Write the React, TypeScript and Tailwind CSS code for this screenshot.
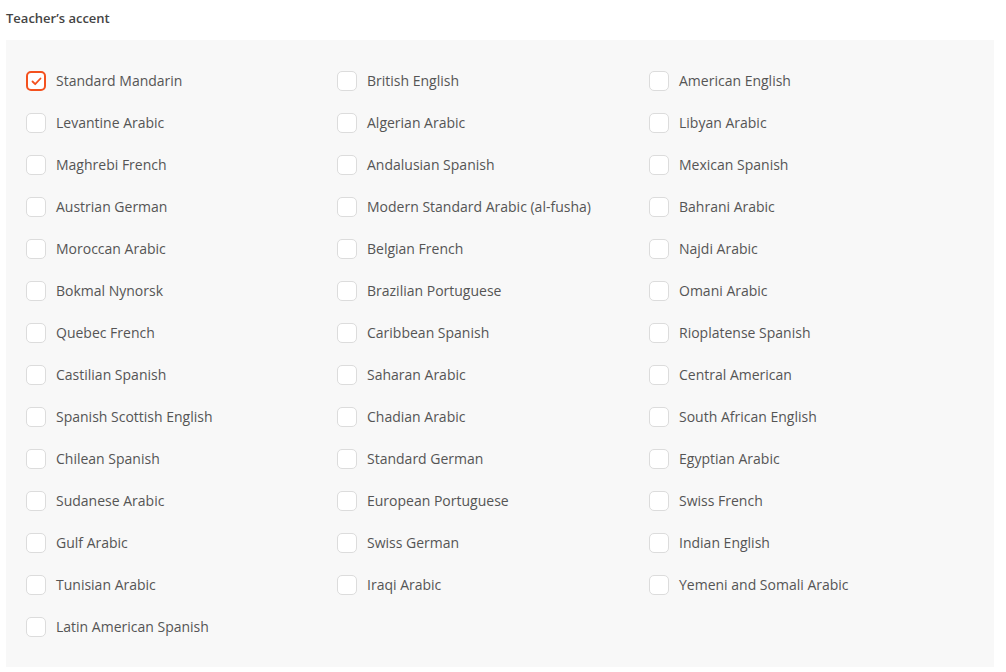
import React from 'react';

const accents = [
  'Standard Mandarin', 'British English', 'American English',
  'Levantine Arabic', 'Algerian Arabic', 'Libyan Arabic',
  'Maghrebi French', 'Andalusian Spanish', 'Mexican Spanish',
  'Austrian German', 'Modern Standard Arabic (al-fusha)', 'Bahrani Arabic',
  'Moroccan Arabic', 'Belgian French', 'Najdi Arabic',
  'Bokmal Nynorsk', 'Brazilian Portuguese', 'Omani Arabic',
  'Quebec French', 'Caribbean Spanish', 'Rioplatense Spanish',
  'Castilian Spanish', 'Saharan Arabic', 'Central American',
  'Spanish Scottish English', 'Chadian Arabic', 'South African English',
  'Chilean Spanish', 'Standard German', 'Egyptian Arabic',
  'Sudanese Arabic', 'European Portuguese', 'Swiss French',
  'Gulf Arabic', 'Swiss German', 'Indian English',
  'Tunisian Arabic', 'Iraqi Arabic', 'Yemeni and Somali Arabic',
  'Latin American Spanish',
];

function Checkbox({ checked }: { checked: boolean }) {
  if (checked) {
    return (
      <span className="w-5 h-5 rounded-[5px] border-2 border-[#f4511e] bg-white flex items-center justify-center shrink-0">
        <svg width="11" height="9" viewBox="0 0 11 9" fill="none">
          <path d="M1.5 4.5 L4.2 7.2 L9.5 1.5" stroke="#f4511e" strokeWidth="1.8" strokeLinecap="round" strokeLinejoin="round" />
        </svg>
      </span>
    );
  }
  return <span className="w-5 h-5 rounded-[5px] border border-[#dcdcdc] bg-white shrink-0" />;
}

export default function App() {
  return (
    <main className="min-h-screen bg-white px-[6px] pt-[9px] font-['Open_Sans',sans-serif]">
      <h2 className="text-[13px] font-semibold text-[#444] leading-[18px]">Teacher’s accent</h2>
      <div className="mt-[13px] w-[988px] bg-[#f8f8f8] pl-5 pt-5 pb-[19px]">
        <div className="grid grid-cols-[311px_312px_1fr]">
          {accents.map((name, i) => (
            <label key={name} className="h-[42px] flex items-center gap-[10px] cursor-pointer">
              <Checkbox checked={i === 0} />
              <span className="text-[14px] text-[#555] leading-5">{name}</span>
            </label>
          ))}
        </div>
      </div>
    </main>
  );
}
